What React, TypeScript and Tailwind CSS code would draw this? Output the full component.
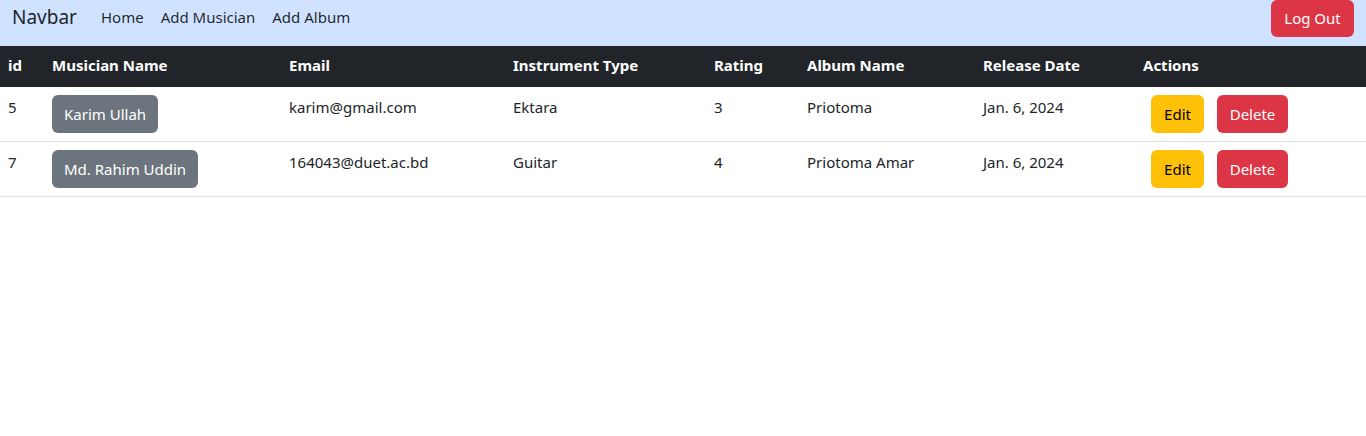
import React from "react";

const rows = [
  { id: 5, name: "Karim Ullah", email: "karim@gmail.com", inst: "Ektara", rating: 3, album: "Priotoma", date: "Jan. 6, 2024" },
  { id: 7, name: "Md. Rahim Uddin", email: "164043@duet.ac.bd", inst: "Guitar", rating: 4, album: "Priotoma Amar", date: "Jan. 6, 2024" },
];

export default function App() {
  return (
    <div className="min-h-[436px] bg-white text-[#212529]" style={{ fontFamily: '"Noto Sans", "Open Sans", sans-serif' }}>
      <nav className="flex h-[46px] items-start justify-between bg-[#cfe2ff]">
        <div className="flex items-center pt-[3px]">
          <span className="ml-[12px] text-[19px] leading-[28px] text-[#212529]">Navbar</span>
          <div className="ml-[24px] flex gap-[17px] text-[15px] leading-[28px] text-[rgba(0,0,0,0.85)]">
            <a>Home</a>
            <a>Add Musician</a>
            <a>Add Album</a>
          </div>
        </div>
        <button className="mr-[12px] h-[37px] w-[83px] rounded-[6px] bg-[#dc3545] pb-[1px] text-[15px] text-white">Log Out</button>
      </nav>
      <table className="w-full table-fixed border-collapse text-left text-[15px]">
        <colgroup>
          <col className="w-[44px]" />
          <col className="w-[237px]" />
          <col className="w-[224px]" />
          <col className="w-[201px]" />
          <col className="w-[93px]" />
          <col className="w-[176px]" />
          <col className="w-[160px]" />
          <col />
        </colgroup>
        <thead>
          <tr className="h-[41px] bg-[#212529] text-white">
            {["id", "Musician Name", "Email", "Instrument Type", "Rating", "Album Name", "Release Date", "Actions"].map((h) => (
              <th key={h} className="px-[8px] pb-[3px] font-bold leading-[24px]">{h}</th>
            ))}
          </tr>
        </thead>
        <tbody>
          {rows.map((r) => (
            <tr key={r.id} className="border-b border-[#dee2e6] align-top leading-[24px]">
              <td className="p-[8px]">{r.id}</td>
              <td className="p-[8px]">
                <button className="h-[38px] rounded-[6px] bg-[#6c757d] px-[12px] text-white">{r.name}</button>
              </td>
              <td className="p-[8px]">{r.email}</td>
              <td className="p-[8px]">{r.inst}</td>
              <td className="p-[8px]">{r.rating}</td>
              <td className="p-[8px]">{r.album}</td>
              <td className="p-[8px]">{r.date}</td>
              <td className="p-[8px]">
                <div className="flex">
                  <button className="ml-[8px] h-[38px] w-[53px] rounded-[6px] bg-[#ffc107] text-[#000]">Edit</button>
                  <button className="ml-[13px] h-[38px] w-[71px] rounded-[6px] bg-[#dc3545] text-white">Delete</button>
                </div>
              </td>
            </tr>
          ))}
        </tbody>
      </table>
    </div>
  );
}
